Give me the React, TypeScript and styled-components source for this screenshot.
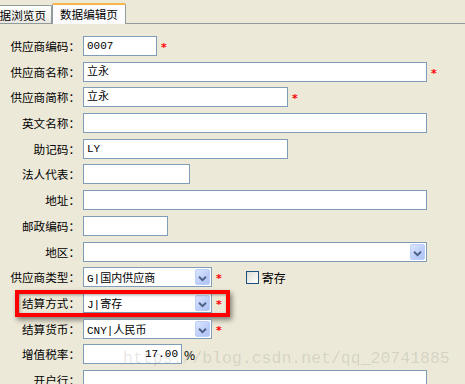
import styled, { createGlobalStyle } from 'styled-components';

const GlobalStyle = createGlobalStyle`
  body {
    margin: 0;
    background: #ece9d8;
    font-family: "Noto Sans CJK SC", sans-serif;
  }
`;

const CJK = `"Noto Sans CJK SC", "Liberation Sans", sans-serif`;
const VALUE_FONT = `"Liberation Mono", "Noto Sans CJK SC", monospace`;

type Field = {
  label: string;
  width: number;
  value?: string;
  kind?: 'input' | 'select' | 'number';
  required?: boolean;
  suffix?: string;
  highlight?: boolean;
  check?: string;
};

const fields: Field[] = [
  { label: '供应商编码：', width: 74, value: '0007', required: true },
  { label: '供应商名称：', width: 344, value: '立永', required: true },
  { label: '供应商简称：', width: 205, value: '立永', required: true },
  { label: '英文名称：', width: 344 },
  { label: '助记码：', width: 205, value: 'LY' },
  { label: '法人代表：', width: 107 },
  { label: '地址：', width: 344 },
  { label: '邮政编码：', width: 85 },
  { label: '地区：', width: 344, kind: 'select' },
  { label: '供应商类型：', width: 129, kind: 'select', value: 'G|国内供应商', required: true, check: '寄存' },
  { label: '结算方式：', width: 129, kind: 'select', value: 'J|寄存', required: true, highlight: true },
  { label: '结算货币：', width: 129, kind: 'select', value: 'CNY|人民币', required: true },
  { label: '增值税率：', width: 99, kind: 'number', value: '17.00', suffix: '%' },
  { label: '开户行：', width: 344 },
];

function Chevron() {
  return (
    <svg width="15" height="17" viewBox="0 0 15 17">
      <polyline
        points="3.5,6.5 7.5,10.5 11.5,6.5"
        fill="none"
        stroke="#4d6185"
        strokeWidth="2.2"
      />
    </svg>
  );
}

function App() {
  return (
    <>
      <GlobalStyle />
      <Page>
        <TabStrip>
          <Tab>数据浏览页</Tab>
          <Tab $active>数据编辑页</Tab>
        </TabStrip>

        <Form>
          {fields.map((f) => (
            <Row key={f.label} $highlight={f.highlight}>
              <Label>{f.label}</Label>
              {f.kind === 'select' ? (
                <Select $width={f.width}>
                  <span>{f.value}</span>
                  <DropButton>
                    <Chevron />
                  </DropButton>
                </Select>
              ) : (
                <Input $width={f.width} $align={f.kind === 'number' ? 'right' : 'left'}>
                  {f.value}
                </Input>
              )}
              {f.suffix && <Suffix>{f.suffix}</Suffix>}
              {f.required && <Star>*</Star>}
              {f.check && (
                <CheckLabel>
                  <CheckBox />
                  {f.check}
                </CheckLabel>
              )}
            </Row>
          ))}
        </Form>

        <Watermark>https://blog.csdn.net/qq_20741885</Watermark>
      </Page>
    </>
  );
}

const Page = styled.div`
  position: relative;
  width: 465px;
  height: 384px;
  overflow: hidden;
  background: #ece9d8;
`;

const TabStrip = styled.div`
  display: flex;
  align-items: flex-end;
  height: 24px;
  margin-left: -19px;
  border-bottom: 1px solid #919b9c;
  box-sizing: border-box;
`;

const Tab = styled.div<{ $active?: boolean }>`
  box-sizing: border-box;
  display: flex;
  align-items: center;
  height: ${({ $active }) => ($active ? '21px' : '18px')};
  margin-bottom: ${({ $active }) => ($active ? '-1px' : '0')};
  padding: ${({ $active }) => ($active ? '0 7px 1px 7px' : '1px 5px 0 6px')};
  border: 1px solid #919b9c;
  border-bottom: none;
  border-top: ${({ $active }) => ($active ? '2px solid #f7b64a' : '1px solid #919b9c')};
  border-radius: 2px 2px 0 0;
  background: ${({ $active }) =>
    $active ? '#fcfcfe' : 'linear-gradient(#ffffff, #f3f3ef 60%, #e8e7e0)'};
  font-family: ${CJK};
  font-size: 11.6px;
  color: #000;
  white-space: nowrap;
`;

const Form = styled.div`
  display: flex;
  flex-direction: column;
  gap: 5.7px;
  padding-top: 12px;
`;

const Row = styled.div<{ $highlight?: boolean }>`
  position: relative;
  display: flex;
  align-items: center;
  height: 20px;

  &::after {
    content: '';
    display: ${({ $highlight }) => ($highlight ? 'block' : 'none')};
    position: absolute;
    left: 15px;
    top: -3px;
    width: 215px;
    height: 27px;
    box-sizing: border-box;
    border: 4px solid #ff0000;
    box-shadow: 2px 3px 5px rgba(0, 0, 0, 0.45), inset 1px 1px 3px rgba(0, 0, 0, 0.35);
    pointer-events: none;
  }
`;

const Label = styled.div`
  width: 80px;
  margin-right: 3px;
  text-align: right;
  font-family: ${CJK};
  font-size: 11.6px;
  line-height: 20px;
  color: #000;
  white-space: nowrap;
`;

const Input = styled.div<{ $width: number; $align: 'left' | 'right' }>`
  box-sizing: border-box;
  width: ${({ $width }) => $width}px;
  height: 20px;
  padding: 0 3px;
  border: 1px solid #7f9db9;
  background: #fff;
  font-family: ${VALUE_FONT};
  font-size: 11px;
  line-height: 18px;
  text-align: ${({ $align }) => $align};
  color: #000;
`;

const Select = styled.div<{ $width: number }>`
  box-sizing: border-box;
  display: flex;
  align-items: center;
  justify-content: space-between;
  width: ${({ $width }) => $width}px;
  height: 20px;
  padding: 0 1px 0 3px;
  border: 1px solid #7f9db9;
  background: #fff;
  font-family: ${VALUE_FONT};
  font-size: 11px;
  color: #000;
  white-space: nowrap;
`;

const DropButton = styled.div`
  box-sizing: border-box;
  display: flex;
  width: 15px;
  height: 16px;
  border: 1px solid #bccffa;
  border-radius: 2px;
  background: linear-gradient(135deg, #dce6fd, #bccdf9 60%, #afc4f6);
`;

const Star = styled.span`
  margin-left: 4px;
  margin-top: 3px;
  font-family: "DejaVu Sans", sans-serif;
  font-size: 11px;
  font-weight: bold;
  color: #ff0000;
`;

const Suffix = styled.span`
  margin-left: 2px;
  font-family: ${CJK};
  font-size: 12px;
  color: #000;
`;

const CheckLabel = styled.label`
  display: flex;
  align-items: center;
  gap: 3px;
  margin-left: 24px;
  font-family: ${CJK};
  font-size: 12px;
  color: #000;
`;

const CheckBox = styled.span`
  box-sizing: border-box;
  width: 13px;
  height: 13px;
  border: 1px solid #1c5180;
  background: linear-gradient(135deg, #dcdcd7, #f5f5f2 70%, #ffffff);
`;

const Watermark = styled.div`
  position: absolute;
  left: 123px;
  top: 349px;
  font-family: "Liberation Mono", monospace;
  font-size: 16.5px;
  line-height: 20px;
  color: rgba(0, 0, 0, 0.11);
  white-space: nowrap;
  pointer-events: none;
`;

export default App;
